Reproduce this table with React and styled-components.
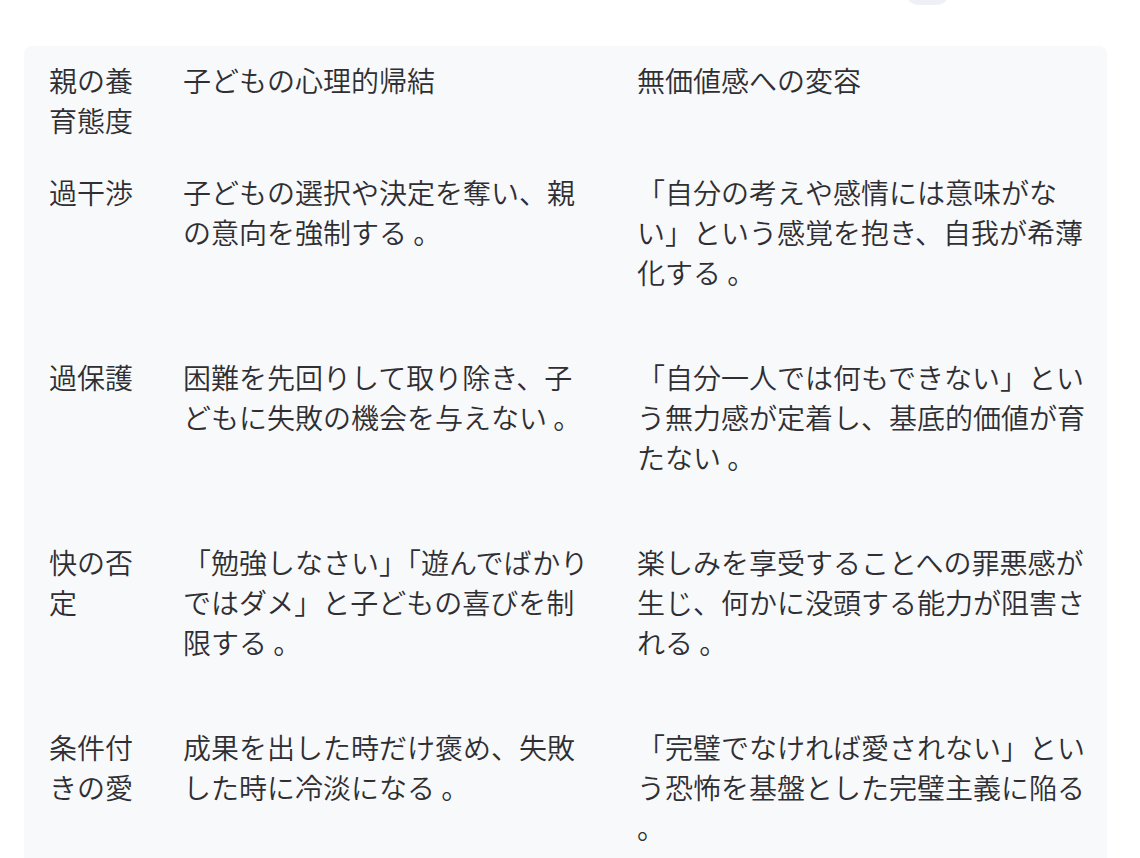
import React from "react"
import styled, { createGlobalStyle } from "styled-components"

const GlobalStyle = createGlobalStyle`
  html, body {
    margin: 0;
    padding: 0;
    background: #ffffff;
    overflow: hidden;
  }
  body {
    font-family: "Noto Sans CJK JP", "Noto Sans", sans-serif;
    color: #2f2f33;
  }
`

const Page = styled.div`
  width: 1140px;
  height: 858px;
  overflow: hidden;
`

const TopBar = styled.div`
  display: flex;
  justify-content: flex-end;
  padding-right: 190px;
  height: 46px;
`

const Pill = styled.div`
  width: 45px;
  height: 30px;
  margin-top: -25px;
  border-radius: 14px;
  background: #eef0f6;
`

const Panel = styled.div`
  margin: 0 33px 0 24px;
  padding: 0 12px 0 25px;
  background: #f8f9fb;
  border-radius: 8px 8px 0 0;
  height: 900px;
`

const Row = styled.div`
  display: grid;
  grid-template-columns: 134px 454px 1fr;
  padding: ${p => (p.$head ? "14px 0 16px" : "16px 0 49px")};
`

const Cell = styled.div`
  font-size: 28px;
  font-weight: 350;
  line-height: 40px;
  padding-right: ${p => p.$gap}px;
  line-break: strict;
`

const rows = [
  ["過干渉", "子どもの選択や決定を奪い、親の意向を強制する 。", "「自分の考えや感情には意味がない」という感覚を抱き、自我が希薄化する 。"],
  ["過保護", "困難を先回りして取り除き、子どもに失敗の機会を与えない 。", "「自分一人では何もできない」という無力感が定着し、基底的価値が育たない 。"],
  ["快の否定", "「勉強しなさい」「遊んでばかりではダメ」と子どもの喜びを制限する 。", "楽しみを享受することへの罪悪感が生じ、何かに没頭する能力が阻害される 。"],
  ["条件付きの愛", "成果を出した時だけ褒め、失敗した時に冷淡になる 。", "「完璧でなければ愛されない」という恐怖を基盤とした完璧主義に陥る 。"],
]

const App = () => (
  <Page>
    <GlobalStyle />
    <TopBar>
      <Pill />
    </TopBar>
    <Panel>
      <Row $head>
        <Cell $gap={30}>親の養育態度</Cell>
        <Cell $gap={42}>子どもの心理的帰結</Cell>
        <Cell $gap={0}>無価値感への変容</Cell>
      </Row>
      {rows.map(r => (
        <Row key={r[0]}>
          <Cell $gap={30}>{r[0]}</Cell>
          <Cell $gap={42}>{r[1]}</Cell>
          <Cell $gap={0}>{r[2]}</Cell>
        </Row>
      ))}
    </Panel>
  </Page>
)

export default App
